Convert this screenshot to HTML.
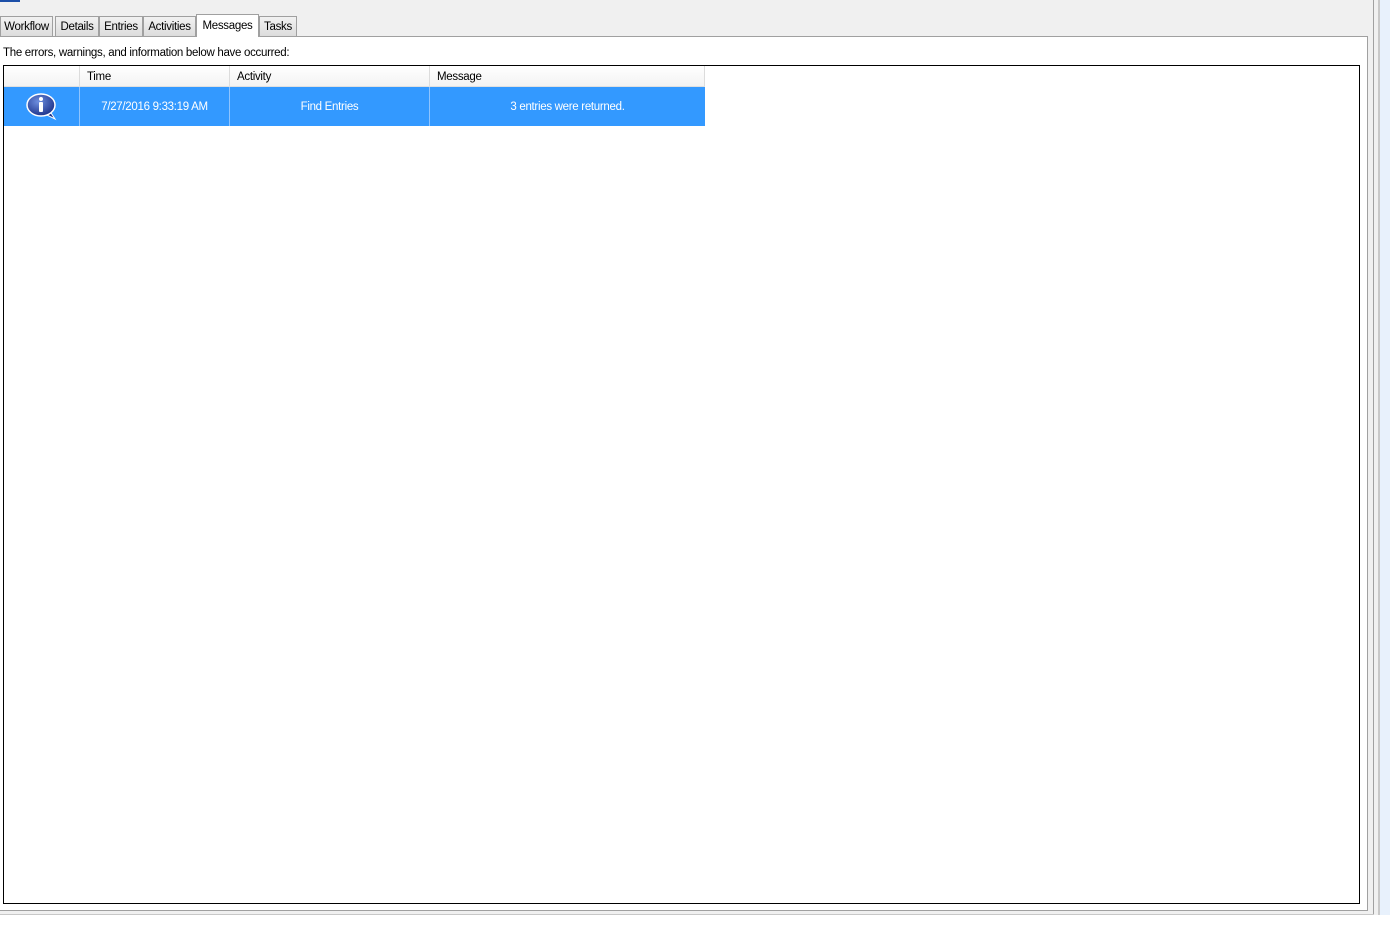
<!DOCTYPE html>
<html><head><style>
*{margin:0;padding:0;box-sizing:border-box}
body{width:1390px;height:936px;background:#fff;position:relative;overflow:hidden;font-family:"Liberation Sans",sans-serif;font-size:11.5px;color:#000;letter-spacing:-0.3px}
.a{position:absolute}
.tab{position:absolute;top:16px;height:20px;border:1px solid #a0a0a0;border-bottom:none;background:linear-gradient(#f2f2f2,#dcdcdc);padding-top:4px;text-align:center}
.hd{position:absolute;top:0;height:20px;border-right:1px solid #dcdcdc;padding:5px 0 0 7px}
.cell{position:absolute;top:0;height:39px;border-right:1px solid #8ec4ff;color:#fff;text-align:center;padding-top:14px}
</style></head><body>
<div class="a" style="left:0;top:0;width:1373px;height:915px;background:#f0f0f0"></div>
<div class="a" style="left:0;top:0;width:20px;height:2px;background:#1c4fa8"></div>
<div class="a" style="left:1373px;top:0;width:1px;height:915px;background:#a0a0a0"></div>
<div class="a" style="left:1374px;top:0;width:4px;height:915px;background:#f0f0f0"></div>
<div class="a" style="left:1378px;top:0;width:2px;height:915px;background:#c8c8c8"></div>
<div class="a" style="left:1380px;top:0;width:10px;height:915px;background:#e8f1fc"></div>
<div class="a" style="left:0;top:914px;width:1374px;height:1px;background:#c8c8c8"></div>
<div class="a" style="left:0;top:36px;width:1368px;height:875px;border:1px solid #a0a0a0;border-left:none;background:#fff"></div>
<div class="tab" style="left:0;width:53px">Workflow</div>
<div class="tab" style="left:55px;width:44px">Details</div>
<div class="tab" style="left:99px;width:44px">Entries</div>
<div class="tab" style="left:143px;width:53px">Activities</div>
<div class="tab" style="left:196px;width:63px;top:14px;height:23px;background:#fff;padding-top:5px">Messages</div>
<div class="tab" style="left:259px;width:38px">Tasks</div>
<div class="a" style="left:3px;top:47px">The errors, warnings, and information below have occurred:</div>
<div class="a" style="left:3px;top:65px;width:1357px;height:839px;border:1px solid #000;background:#fff">
 <div class="a" style="left:0;top:0;width:701px;height:21px;background:linear-gradient(#fff,#f3f3f3);border-bottom:1px solid #e0e0e0">
  <div class="hd" style="left:0;width:76px"></div>
  <div class="hd" style="left:76px;width:150px">Time</div>
  <div class="hd" style="left:226px;width:200px">Activity</div>
  <div class="hd" style="left:426px;width:275px">Message</div>
 </div>
 <div class="a" style="left:0;top:21px;width:701px;height:39px;background:#3399ff">
  <div class="cell" style="left:0;width:76px;padding-top:0">
   <svg width="34" height="30" viewBox="0 0 34 30" style="margin-top:5px"><defs><radialGradient id="g" cx="0.4" cy="0.35" r="0.7"><stop offset="0" stop-color="#6e8fe0"/><stop offset="1" stop-color="#1a2f86"/></radialGradient></defs><path d="M26 21 L30 27 L22 23 Z" fill="#1a2f86" stroke="#fff" stroke-width="1"/><ellipse cx="16" cy="13" rx="14" ry="11" fill="url(#g)" stroke="#fff" stroke-width="1.5"/><circle cx="16" cy="7" r="2" fill="#fff"/><rect x="14" y="10" width="4" height="10" rx="1" fill="#fff"/></svg>
  </div>
  <div class="cell" style="left:76px;width:150px">7/27/2016 9:33:19 AM</div>
  <div class="cell" style="left:226px;width:200px">Find Entries</div>
  <div class="cell" style="left:426px;width:275px;border-right:none">3 entries were returned.</div>
 </div>
</div>
</body></html>
